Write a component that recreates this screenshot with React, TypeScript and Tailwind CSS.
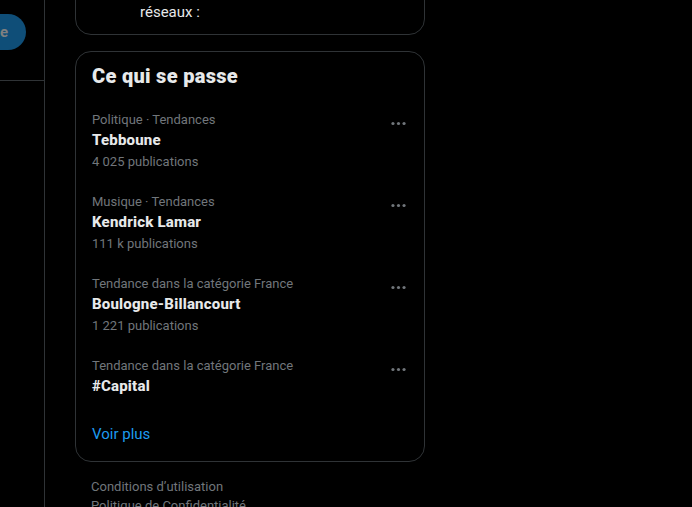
import React from "react";

type Trend = {
  context: string;
  name: string;
  count?: string;
};

const trends: Trend[] = [
  { context: "Politique · Tendances", name: "Tebboune", count: "4 025 publications" },
  { context: "Musique · Tendances", name: "Kendrick Lamar", count: "111 k publications" },
  { context: "Tendance dans la catégorie France", name: "Boulogne-Billancourt", count: "1 221 publications" },
  { context: "Tendance dans la catégorie France", name: "#Capital" },
];

function Dots() {
  return (
    <svg viewBox="0 0 24 24" className="w-[19px] h-[19px]" fill="#71767b">
      <circle cx="5" cy="12" r="2" />
      <circle cx="12" cy="12" r="2" />
      <circle cx="19" cy="12" r="2" />
    </svg>
  );
}

export default function App() {
  return (
    <div
      className="flex w-[692px] h-[507px] bg-black overflow-hidden"
      style={{ fontFamily: "Roboto, 'Liberation Sans', sans-serif" }}
    >
      {/* Left sidebar edge */}
      <div className="w-[45px] shrink-0 border-r border-[#2f3336] overflow-hidden">
        <div className="pt-[14px] h-[81px] border-b border-[#2f3336]">
          <div className="ml-[-34px] w-[60px] h-[36px] rounded-full bg-[#0f4e78] flex items-center justify-end pr-[18px]">
            <span className="text-[15px] font-bold text-[#808080]">e</span>
          </div>
        </div>
      </div>

      {/* Right column */}
      <div className="ml-[30px] w-[350px] flex flex-col">
        <div className="h-[55px] -mt-[20px] shrink-0 border border-[#2f3336] rounded-2xl flex items-end pl-[64px] pb-[12px]">
          <span className="text-[15px] leading-[20px] text-[#e7e9ea]">réseaux :</span>
        </div>

        <div className="mt-[16px] border border-[#2f3336] rounded-2xl">
          <div className="px-4 py-3">
            <h2 className="text-[20px] leading-[24px] font-black tracking-[0.3px] text-[#e7e9ea]">Ce qui se passe</h2>
          </div>

          {trends.map((t) => (
            <div key={t.name} className="px-4 py-3 flex justify-between">
              <div className="flex flex-col">
                <span className="text-[13px] leading-[16px] text-[#71767b]">{t.context}</span>
                <span className="mt-[2px] text-[15px] leading-[20px] font-extrabold tracking-[0.2px] text-[#e7e9ea]">{t.name}</span>
                {t.count && (
                  <span className="mt-[4px] text-[13px] leading-[16px] text-[#71767b]">{t.count}</span>
                )}
              </div>
              <div className="mt-[2px]">
                <Dots />
              </div>
            </div>
          ))}

          <div className="px-4 pt-[14px] pb-[15px]">
            <span className="text-[15px] leading-[20px] text-[#1d9bf0]">Voir plus</span>
          </div>
        </div>

        <div className="px-4 pt-[15px] flex flex-col text-[13px] leading-[19px] text-[#71767b]">
          <span>Conditions d’utilisation</span>
          <span>Politique de Confidentialité</span>
        </div>
      </div>
    </div>
  );
}
